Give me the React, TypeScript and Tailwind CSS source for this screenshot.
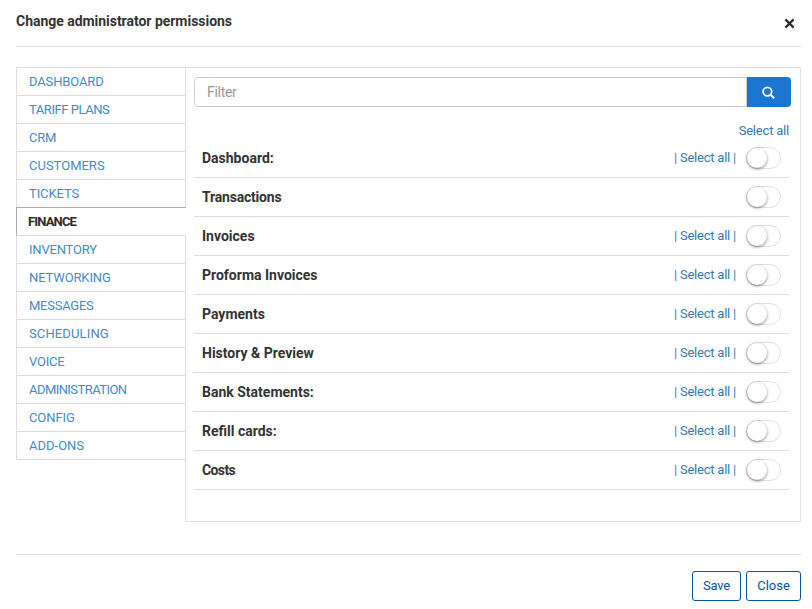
const tabs: { name: string; tracking: string }[] = [
  { name: 'DASHBOARD', tracking: 'tracking-[-0.13px]' },
  { name: 'TARIFF PLANS', tracking: 'tracking-[-0.45px]' },
  { name: 'CRM', tracking: 'tracking-[-0.2px]' },
  { name: 'CUSTOMERS', tracking: '' },
  { name: 'TICKETS', tracking: 'tracking-[-0.1px]' },
  { name: 'FINANCE', tracking: 'tracking-[-0.85px]' },
  { name: 'INVENTORY', tracking: 'tracking-[-0.2px]' },
  { name: 'NETWORKING', tracking: 'tracking-[-0.13px]' },
  { name: 'MESSAGES', tracking: 'tracking-[-0.25px]' },
  { name: 'SCHEDULING', tracking: 'tracking-[0.13px]' },
  { name: 'VOICE', tracking: 'tracking-[-0.25px]' },
  { name: 'ADMINISTRATION', tracking: 'tracking-[-0.56px]' },
  { name: 'CONFIG', tracking: 'tracking-[-0.1px]' },
  { name: 'ADD-ONS', tracking: '' },
];

const sections: { name: string; tracking: string; selectable: boolean }[] = [
  { name: 'Dashboard:', tracking: '', selectable: true },
  { name: 'Transactions', tracking: 'tracking-[-0.2px]', selectable: false },
  { name: 'Invoices', tracking: '', selectable: true },
  { name: 'Proforma Invoices', tracking: '', selectable: true },
  { name: 'Payments', tracking: '', selectable: true },
  { name: 'History & Preview', tracking: '', selectable: true },
  { name: 'Bank Statements:', tracking: '', selectable: true },
  { name: 'Refill cards:', tracking: '', selectable: true },
  { name: 'Costs', tracking: 'tracking-[-0.6px]', selectable: true },
];

function Toggle() {
  return (
    <button role="switch" aria-checked="false" className="flex h-[22px] w-[35px] rounded-full border border-[#dfdfdf] bg-white">
      <span className="size-5 rounded-full bg-white shadow-[0_1px_3px_rgba(0,0,0,0.5)]" />
    </button>
  );
}

export default function App() {
  return (
    <div className="flex h-[609px] w-[812px] flex-col overflow-hidden bg-white pr-[11px] pl-4 font-['Roboto','Liberation_Sans',sans-serif] text-[13px] leading-5 text-[#333]">
      <header className="flex h-[47px] shrink-0 items-start justify-between border-b border-[#ddd] pt-[11px]">
        <h1 className="text-sm font-bold tracking-[-0.03px] whitespace-nowrap">Change administrator permissions</h1>
        <button aria-label="Close dialog" className="mt-[7px] mr-1.5">
          <svg width="11" height="11" viewBox="0 0 11 11" fill="none" stroke="#2b2b2b" strokeWidth="2.2">
            <path d="M1.4 1.4l8.2 8.2M9.6 1.4l-8.2 8.2" />
          </svg>
        </button>
      </header>

      <main className="mt-5 flex h-[455px] shrink-0 items-start">
        <nav className="z-10 w-[170px] shrink-0 border-t border-[#ddd]">
          {tabs.map((tab) =>
            tab.name === 'FINANCE' ? (
              <a key={tab.name} className="-mt-px flex h-[29px] items-center border-t border-b border-l border-t-[#aaa] border-b-[#ddd] border-l-[#aaa] bg-white pl-[11px] font-bold text-[#2b2b2b]">
                <span className={tab.tracking}>{tab.name}</span>
              </a>
            ) : (
              <a key={tab.name} className="flex h-7 items-center border-x border-b border-[#ddd] pl-3 text-[#428bca]">
                <span className={tab.tracking}>{tab.name}</span>
              </a>
            ),
          )}
        </nav>
        <section className="-ml-px h-[455px] w-[616px] border border-[#e2e2e2] pt-[9px] pr-[9px] pl-2">
          <div className="flex h-[30px]">
            <input
              placeholder="Filter"
              className="h-[30px] w-[553px] rounded-l border border-[#ccc] bg-white pl-3 text-sm tracking-[-0.3px] outline-none placeholder:text-[#999]"
            />
            <button aria-label="Search" className="flex h-[30px] w-11 items-center justify-center rounded-r bg-[#1976d2]">
              <svg width="13" height="13" viewBox="0 0 13 13" fill="none" stroke="white" strokeWidth="1.8" className="-ml-px">
                <circle cx="5.4" cy="5.6" r="4.3" />
                <path d="M8.5 8.7l3.7 3.5" strokeWidth="2.1" />
              </svg>
            </button>
          </div>
          <div className="mt-3.5 mr-0.5 flex h-[18px] items-center justify-end pt-0.5 text-[#337ab7]">
            <a className="tracking-[-0.2px]">Select all</a>
          </div>
          <div className="mr-0.5">
            {sections.map((s) => (
              <div key={s.name} className="flex h-[39px] items-center border-b border-[#ddd] pr-2 pl-2">
                <h2 className="text-sm font-bold whitespace-nowrap">
                  <span className={s.tracking}>{s.name}</span>
                </h2>
                <div className="ml-auto flex items-center">
                  {s.selectable && <a className="mr-2.5 tracking-[-0.22px] whitespace-pre text-[#337ab7]">| Select all |</a>}
                  <Toggle />
                </div>
              </div>
            ))}
          </div>
        </section>
      </main>

      <footer className="mt-8 flex shrink-0 justify-end gap-[5px] border-t border-[#ddd] pt-4 text-[#01579b]">
        <button className="h-[30px] w-[49px] rounded-[3px] border border-[#01579b] tracking-[-0.15px]">Save</button>
        <button className="h-[30px] w-[55px] rounded-[3px] border border-[#01579b]">Close</button>
      </footer>
    </div>
  );
}
